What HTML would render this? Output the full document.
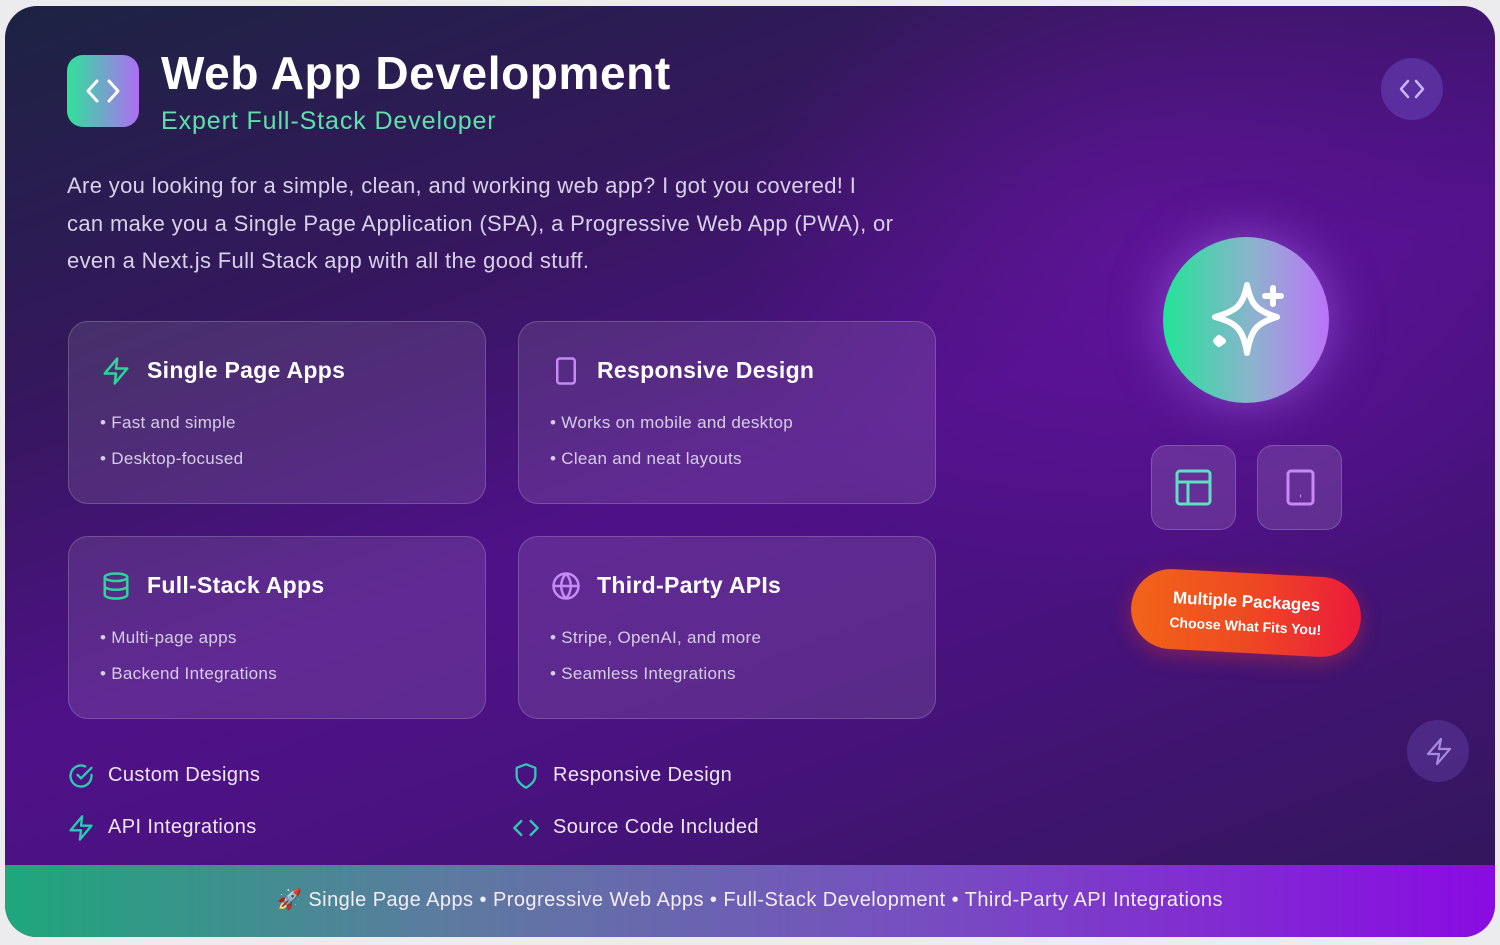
<!DOCTYPE html>
<html><head><meta charset="utf-8"><style>
*{margin:0;padding:0;box-sizing:border-box}
body{width:1500px;height:945px;background:#ececef;font-family:"Liberation Sans",sans-serif;overflow:hidden;position:relative}
.card{position:absolute;left:5px;top:6px;width:1490px;height:931px;border-radius:32px;overflow:hidden;
background:radial-gradient(ellipse 600px 500px at 1150px 250px,rgba(110,20,170,.55),transparent 70%),linear-gradient(160deg,#1c2342 0%,#36175f 28%,#4f1188 50%,#4a1280 65%,#2f1757 100%)}
.abs{position:absolute}
h1{position:absolute;left:156px;top:40px;font-size:46px;font-weight:700;color:#fff;letter-spacing:.6px}
.sub{left:156px;top:101px;font-size:25px;color:#5fe0a8;letter-spacing:.9px}
.logo{left:62px;top:49px;width:72px;height:72px;border-radius:16px;background:linear-gradient(90deg,#2fe29a,#b06cf5)}
.para{left:62px;top:161px;width:870px;font-size:22px;line-height:37.5px;color:#d9d0e9;letter-spacing:.35px}
.box{position:absolute;width:418px;height:183px;border-radius:20px;background:rgba(255,255,255,.1);border:1.5px solid rgba(255,255,255,.18)}
.box .t{position:absolute;left:78px;top:35px;font-size:23px;font-weight:700;color:#fff;letter-spacing:.3px}
.box .ic{position:absolute;left:32px;top:34px}
.box .b{position:absolute;left:31px;font-size:17px;color:#d6cde6;letter-spacing:.3px}
.feat{position:absolute;font-size:20px;color:#ece6f5;letter-spacing:.4px}
.foot{left:0;top:859px;width:1490px;height:72px;background:linear-gradient(90deg,#1ea77b 0%,#5d7aa0 30%,#7650bf 60%,#8a0be2 100%);color:#f3eefa;font-size:20px;text-align:center;line-height:70px;letter-spacing:.45px}
.sq{position:absolute;width:85px;height:85px;border-radius:16px;background:rgba(255,255,255,.12);border:1.5px solid rgba(255,255,255,.18)}
</style></head><body>
<div class="card">
<div class="abs logo"><svg width="72" height="72" viewBox="0 0 72 72" fill="none" stroke="#fff" stroke-width="3" stroke-linecap="round" stroke-linejoin="round"><path d="M30 26l-9 10 9 10M42 26l9 10-9 10"/></svg></div>
<h1>Web App Development</h1>
<div class="abs sub">Expert Full-Stack Developer</div>
<div class="abs para">Are you looking for a simple, clean, and working web app? I got you covered! I<br>can make you a Single Page Application (SPA), a Progressive Web App (PWA), or<br>even a Next.js Full Stack app with all the good stuff.</div>

<div class="box" style="left:63px;top:315px">
<svg class="ic" width="30" height="30" viewBox="0 0 24 24" fill="none" stroke="#2fd49a" stroke-width="2" stroke-linejoin="round"><path d="M13 2L3 14h9l-1 8 10-12h-9l1-8z"/></svg>
<div class="t">Single Page Apps</div><div class="b" style="top:91px">• Fast and simple</div><div class="b" style="top:127px">• Desktop-focused</div></div>
<div class="box" style="left:513px;top:315px">
<svg class="ic" width="30" height="30" viewBox="0 0 24 24" fill="none" stroke="#c58af5" stroke-width="2"><rect x="5" y="2" width="14" height="20" rx="2"/><path d="M12 18h.01"/></svg>
<div class="t">Responsive Design</div><div class="b" style="top:91px">• Works on mobile and desktop</div><div class="b" style="top:127px">• Clean and neat layouts</div></div>
<div class="box" style="left:63px;top:530px">
<svg class="ic" width="30" height="30" viewBox="0 0 24 24" fill="none" stroke="#2fd49a" stroke-width="2"><ellipse cx="12" cy="5" rx="9" ry="3"/><path d="M3 5v14c0 1.7 4 3 9 3s9-1.3 9-3V5M3 12c0 1.7 4 3 9 3s9-1.3 9-3"/></svg>
<div class="t">Full-Stack Apps</div><div class="b" style="top:91px">• Multi-page apps</div><div class="b" style="top:127px">• Backend Integrations</div></div>
<div class="box" style="left:513px;top:530px">
<svg class="ic" width="30" height="30" viewBox="0 0 24 24" fill="none" stroke="#c58af5" stroke-width="2"><circle cx="12" cy="12" r="10"/><path d="M2 12h20M12 2a15 15 0 0 1 0 20M12 2a15 15 0 0 0 0 20"/></svg>
<div class="t">Third-Party APIs</div><div class="b" style="top:91px">• Stripe, OpenAI, and more</div><div class="b" style="top:127px">• Seamless Integrations</div></div>

<svg class="abs" style="left:62px;top:756px" width="28" height="28" viewBox="0 0 24 24" fill="none" stroke="#2ec9b0" stroke-width="2" stroke-linecap="round"><path d="M21 11v1a9 9 0 1 1-5.3-8.2"/><path d="M9 11l3 3 9-9"/></svg>
<div class="feat" style="left:103px;top:758px">Custom Designs</div>
<svg class="abs" style="left:62px;top:808px" width="28" height="28" viewBox="0 0 24 24" fill="none" stroke="#2ec9b0" stroke-width="2" stroke-linejoin="round"><path d="M13 2L3 14h9l-1 8 10-12h-9l1-8z"/></svg>
<div class="feat" style="left:103px;top:810px">API Integrations</div>
<svg class="abs" style="left:507px;top:756px" width="28" height="28" viewBox="0 0 24 24" fill="none" stroke="#2ec9b0" stroke-width="2" stroke-linejoin="round"><path d="M12 22s8-4 8-10V5l-8-3-8 3v7c0 6 8 10 8 10z"/></svg>
<div class="feat" style="left:548px;top:758px">Responsive Design</div>
<svg class="abs" style="left:507px;top:808px" width="28" height="28" viewBox="0 0 24 24" fill="none" stroke="#2ec9b0" stroke-width="2" stroke-linecap="round" stroke-linejoin="round"><path d="M8 6l-6 6 6 6M16 6l6 6-6 6"/></svg>
<div class="feat" style="left:548px;top:810px">Source Code Included</div>

<div class="abs" style="left:1376px;top:52px;width:62px;height:62px;border-radius:50%;background:rgba(110,80,200,.45)"><svg width="62" height="62" viewBox="0 0 62 62" fill="none" stroke="#c7b6f5" stroke-width="2.5" stroke-linecap="round" stroke-linejoin="round"><path d="M27 23l-7 8 7 8M35 23l7 8-7 8"/></svg></div>
<div class="abs" style="left:1158px;top:231px;width:166px;height:166px;border-radius:50%;background:linear-gradient(90deg,#20e596,#8fb1d0 55%,#bc72f8);box-shadow:0 0 50px rgba(180,120,255,.5)">
<svg width="166" height="166" viewBox="0 0 166 166" fill="none" stroke="#fff" stroke-width="6" stroke-linejoin="round" stroke-linecap="round"><path d="M84 48 C88 68 94 74 114 80 C94 86 88 92 84 116 C80 92 74 86 52 80 C74 74 80 68 84 48Z"/><path d="M110 51v16M102 59h16"/><path d="M56 101l4 3-4 3-3-3z" fill="#fff"/></svg></div>
<div class="sq" style="left:1146px;top:439px"><svg width="85" height="85" viewBox="0 0 85 85" fill="none" stroke="#5fe0c0" stroke-width="3"><rect x="25" y="25" width="33" height="33" rx="3"/><path d="M25 36h33M36 36v22"/></svg></div>
<div class="sq" style="left:1252px;top:439px"><svg width="85" height="85" viewBox="0 0 85 85" fill="none" stroke="#c58af5" stroke-width="3"><rect x="30" y="25" width="25" height="33" rx="3"/><path d="M42 50h1"/></svg></div>
<div class="abs" style="left:1126px;top:567px;width:230px;height:80px;border-radius:40px;background:linear-gradient(90deg,#f26418,#ee4a22 50%,#ec1a3c);transform:rotate(3deg);box-shadow:0 6px 20px rgba(240,60,40,.35);color:#fff;text-align:center;font-weight:700">
<div style="font-size:17px;padding-top:19px">Multiple Packages</div><div style="font-size:14px;margin-top:6px">Choose What Fits You!</div></div>
<div class="abs" style="left:1402px;top:714px;width:62px;height:62px;border-radius:50%;background:rgba(120,90,200,.3)"><svg width="62" height="62" viewBox="0 0 62 62" fill="none" stroke="#a58ae0" stroke-width="2.2" stroke-linejoin="round"><path d="M34 19L21 34h11l-2 10 13-15H32l2-10z"/></svg></div>

<div class="abs foot">🚀 Single Page Apps • Progressive Web Apps • Full-Stack Development • Third-Party API Integrations</div>
</div>
</body></html>
